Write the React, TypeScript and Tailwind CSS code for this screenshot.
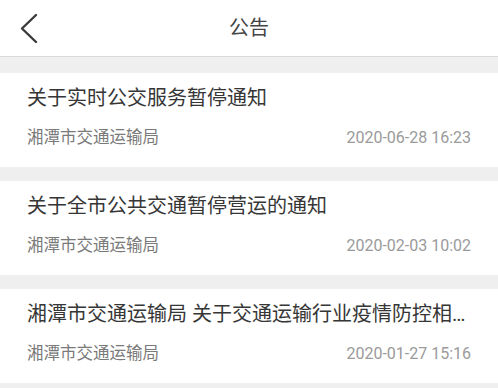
import React from "react";

const items = [
  { title: "关于实时公交服务暂停通知", source: "湘潭市交通运输局", date: "2020-06-28 16:23" },
  { title: "关于全市公共交通暂停营运的通知", source: "湘潭市交通运输局", date: "2020-02-03 10:02" },
  {
    title: "湘潭市交通运输局 关于交通运输行业疫情防控相关工作的通知",
    source: "湘潭市交通运输局",
    date: "2020-01-27 15:16",
  },
];

export default function App() {
  return (
    <div
      className="min-h-screen w-full bg-[#efefef]"
      style={{ fontFamily: 'Roboto, "Noto Sans CJK SC", "Noto Sans", sans-serif' }}
    >
      <header className="grid h-[57px] grid-cols-[60px_1fr_60px] items-center border-b border-[#dadada] bg-white">
        <div className="flex items-center pl-[19px] pt-[1px]">
          <svg width="22" height="32" viewBox="0 0 22 32" fill="none">
            <path d="M17 2 L3 15.5 L17 29" stroke="#3a3a3a" strokeWidth="2.4" strokeLinecap="round" strokeLinejoin="round" />
          </svg>
        </div>
        <h1 className="text-center text-[20px] leading-[28px] text-[#444]">公告</h1>
        <div />
      </header>
      <div className="flex flex-col gap-[14px] pt-[16px]">
        {items.map((it, i) => (
          <div key={i} className="flex h-[94px] flex-col bg-white px-[27px] pt-[11px]">
            <div className="truncate text-[20px] leading-[28px] text-[#363636]">{it.title}</div>
            <div className="mt-[14px] flex h-[24px] items-center justify-between">
              <span className="text-[16.5px] text-[#7a7a7a]">{it.source}</span>
              <span className="text-[16px] text-[#9a9a9a]">{it.date}</span>
            </div>
          </div>
        ))}
      </div>
    </div>
  );
}
